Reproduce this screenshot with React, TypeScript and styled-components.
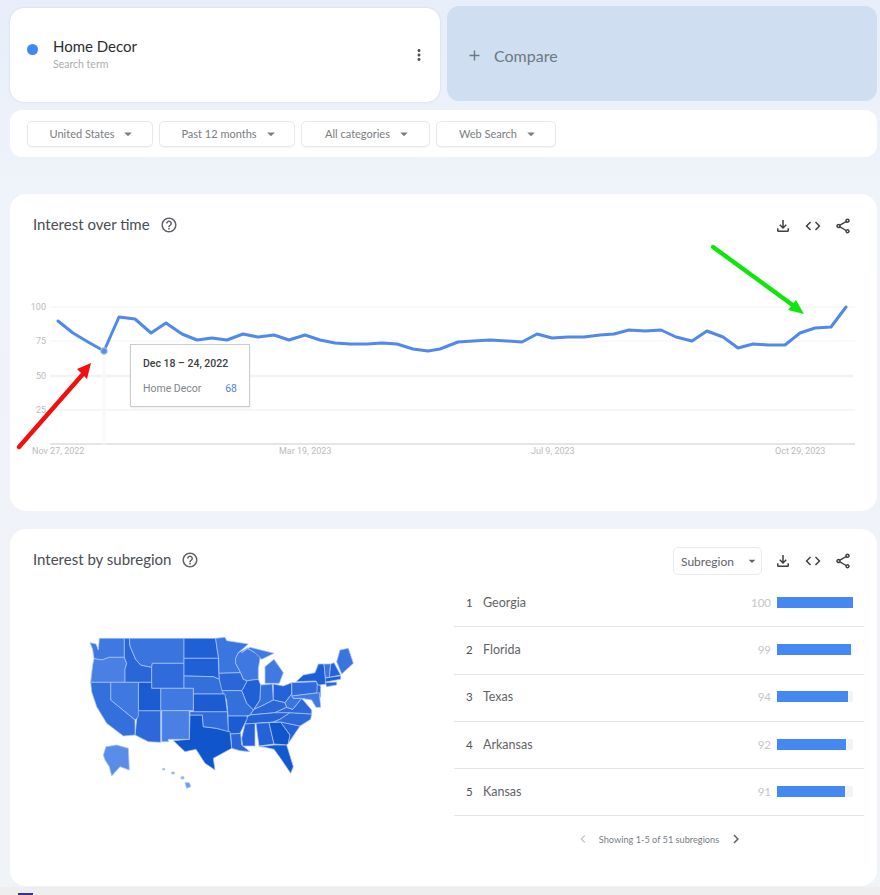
import React from "react";
import styled, { createGlobalStyle } from "styled-components";
import {
  MdAdd,
  MdArrowDropDown,
  MdChevronLeft,
  MdChevronRight,
  MdCode,
  MdHelpOutline,
  MdMoreVert,
  MdOutlineFileDownload,
  MdOutlineShare,
} from "react-icons/md";

const GlobalStyle = createGlobalStyle`
  html, body {
    margin: 0;
    padding: 0;
    overflow: hidden;
    background: #eeeeee;
  }
  * {
    box-sizing: border-box;
  }
`;

const Page = styled.div`
  position: relative;
  width: 880px;
  height: 895px;
  overflow: hidden;
  padding: 6px 3px 0 10px;
  font-family: Lato, "Open Sans", sans-serif;
  background: linear-gradient(180deg, #e7eefa 0, #eff3fa 190px, #f0f3f7 887px, #eeeeee 887px);
`;

const TermRow = styled.div`
  display: grid;
  grid-template-columns: 430px 430px;
  gap: 7px;
`;

const TermCard = styled.div`
  margin-top: 2px;
  height: 94px;
  background: #fff;
  border-radius: 14px;
  display: flex;
  align-items: center;
  padding: 0 17px;
  box-shadow: 0 0 2px rgba(60, 64, 67, 0.2);
`;

const TermDot = styled.span`
  width: 11px;
  height: 11px;
  border-radius: 50%;
  background: #4285f4;
  margin-top: -12px;
  margin-right: 15px;
`;

const TermText = styled.div`
  flex: 1;
  margin-top: -2px;
`;

const TermName = styled.div`
  font-size: 15px;
  line-height: 18px;
  color: #2b2d30;
`;

const TermKind = styled.div`
  font-size: 10.5px;
  line-height: 14px;
  margin-top: 2px;
  color: #a9acb0;
`;

const Kebab = styled.span`
  display: flex;
  color: #4f5357;
  margin-right: -5px;
  margin-top: -1px;
`;

const CompareCard = styled.div`
  height: 95px;
  background: #d0def2;
  border-radius: 12px;
  display: flex;
  align-items: center;
  gap: 11px;
  padding: 4px 19px 0 19px;
  color: #6d7883;
  font-size: 16px;
`;

const FilterBar = styled.div`
  margin-top: 8px;
  height: 47px;
  background: #fff;
  border-radius: 12px;
  display: flex;
  align-items: center;
  gap: 6px;
  padding: 0 17px;
`;

const FilterPill = styled.div<{ $width: number }>`
  width: ${(p) => p.$width}px;
  height: 26px;
  padding-left: 7px;
  border: 1px solid #e6e8ea;
  border-radius: 5px;
  display: flex;
  align-items: center;
  justify-content: center;
  gap: 5px;
  font-size: 11px;
  color: #797d82;
  box-shadow: 0 1px 1px rgba(60, 64, 67, 0.06);
`;

const Card = styled.section<{ $top: number; $height: number }>`
  position: relative;
  margin-top: ${(p) => p.$top}px;
  height: ${(p) => p.$height}px;
  background: #fff;
  border-radius: 16px;
`;

const CardHeader = styled.header`
  height: 46px;
  padding: 18px 25px 0 23px;
  display: flex;
  align-items: center;
`;

const CardTitle = styled.h2`
  margin: -4px 0 0 0;
  font-size: 15px;
  font-weight: 400;
  color: #494d52;
`;

const HelpIcon = styled.span`
  display: flex;
  margin: -2px 0 0 10px;
  color: #5f6368;
`;

const Spacer = styled.div`
  flex: 1;
`;

const ToolIcons = styled.div`
  display: flex;
  align-items: center;
  gap: 12px;
  color: #3c4043;
`;

const SelectBox = styled.div`
  width: 89px;
  height: 28px;
  margin-right: 12px;
  border: 1px solid #e8eaed;
  border-radius: 5px;
  display: flex;
  align-items: center;
  justify-content: space-between;
  padding: 0 1px 0 7px;
  font-size: 12px;
  color: #5f6368;
`;

const ChartSvg = styled.svg`
  display: block;
`;

const AxisText = styled.text`
  font-family: Roboto, sans-serif;
  font-size: 9px;
  fill: #b9bbbe;
`;

const Tooltip = styled.div`
  position: absolute;
  left: 120px;
  top: 150px;
  width: 120px;
  height: 63px;
  padding: 13px 12px 0 12px;
  background: #fff;
  border: 1px solid #c9cbce;
  font-family: Roboto, sans-serif;
  font-size: 10.5px;
  box-shadow: 0 1px 2px rgba(0, 0, 0, 0.08);
`;

const TooltipDate = styled.div`
  font-weight: 500;
  line-height: 12px;
  color: #3c4043;
`;

const TooltipRow = styled.div`
  margin-top: 13px;
  line-height: 12px;
  display: flex;
  justify-content: space-between;
  color: #80868b;
`;

const TooltipValue = styled.span`
  color: #4f7fe8;
`;

const SubBody = styled.div`
  display: flex;
  padding-top: 4px;
`;

const MapBox = styled.div`
  width: 444px;
  padding: 41px 0 0 60px;
`;

const RankList = styled.div`
  width: 410px;
  padding-top: 1px;
`;

const RankRow = styled.div`
  height: 47.3px;
  padding: 0 11px 2px 0;
  border-bottom: 1px solid #e3e4e6;
  display: flex;
  align-items: center;
  font-size: 12.5px;
  color: #5f6368;
`;

const RankNumber = styled.span`
  width: 29px;
  padding-left: 12px;
  font-size: 11.5px;
  color: #4d5156;
`;

const RankName = styled.span`
  flex: 1;
`;

const RankValue = styled.span`
  margin-right: 6px;
  font-size: 11.5px;
  color: #c4c6c8;
`;

const BarTrack = styled.div`
  width: 76px;
  height: 11px;
  background: #f3f3f3;
`;

const BarFill = styled.div`
  height: 100%;
  background: #4688f2;
`;

const Pager = styled.div`
  height: 46px;
  display: flex;
  align-items: center;
  justify-content: center;
  gap: 8px;
  padding-left: 2px;
  font-size: 9.2px;
  color: #797d82;
`;

const PagerArrow = styled.span<{ $muted?: boolean }>`
  display: flex;
  color: ${(p) => (p.$muted ? "#c4c7ca" : "#5f6368")};
`;

const ArrowLayer = styled.svg`
  position: absolute;
  left: 0;
  top: 0;
  pointer-events: none;
`;

const PurpleTab = styled.div`
  position: absolute;
  left: 18px;
  bottom: 0;
  width: 15px;
  height: 2px;
  background: #3f2d8f;
`;

const linePoints =
  "58,321 73,333 88,342 104,351 119,317 135,319 151,333 166,323 182,334 197,340 212,338 227,340 243,334 258,337 274,335 289,340 305,335 320,340 335,343 350,344 367,344 382,343 397,344 413,349 428,351 440,349 458,342 473,341 490,340 507,341 522,342 537,334 552,338 568,337 584,337 600,335 614,334 629,330 645,331 661,330 676,337 692,341 707,331 723,337 738,348 753,344 768,345 785,345 800,333 815,328 831,327 846,307";

const mapStates: { fill: string; points: string }[] = [
  { fill: "#3f78e0", points: "88,55 163,55 163,112 118,112 96,120 72,116 68,88 60,68 78,72 85,90" }, // WA
  { fill: "#4a80e4", points: "72,116 96,120 118,112 163,112 170,130 165,148 165,187 62,187 68,135" }, // OR
  { fill: "#2a66d8", points: "163,55 178,55 180,78 197,118 212,135 245,142 245,187 165,187 165,148 170,130 163,112" }, // ID
  { fill: "#3a74de", points: "178,55 342,55 342,130 247,130 245,142 212,135 197,118 180,78" }, // MT
  { fill: "#2f6bda", points: "247,130 342,130 342,205 245,205 245,142" }, // WY
  { fill: "#2060d6", points: "342,55 437,55 441,85 446,115 342,115" }, // ND
  { fill: "#2060d6", points: "342,115 446,115 445,128 448,178 430,170 342,168" }, // SD
  { fill: "#3470dc", points: "342,168 430,170 448,178 460,212 465,222 370,222 370,205 342,205" }, // NE
  { fill: "#3b75df", points: "437,55 465,52 470,62 490,65 535,72 505,98 497,115 497,130 512,158 447,160 446,115 441,85" }, // MN
  { fill: "#2a66d8", points: "447,160 512,158 520,178 532,182 520,205 515,212 456,212 448,178" }, // IA
  { fill: "#3f78e0", points: "505,98 532,85 555,98 572,105 565,145 565,178 532,182 520,178 512,158 497,130 497,115" }, // WI
  { fill: "#2060d6", points: "532,182 565,178 572,195 570,240 550,270 530,250 515,212 520,205" }, // IL
  { fill: "#4079e2", points: "585,190 585,140 612,118 640,158 628,190" }, // MI
  { fill: "#4079e2", points: "515,98 540,82 612,100 575,118 555,98 532,85" }, // MI upper
  { fill: "#3470dc", points: "572,195 607,192 610,240 575,258 552,268 570,240" }, // IN
  { fill: "#2562d7", points: "610,192 640,198 665,188 665,222 645,248 610,240" }, // OH
  { fill: "#2a66d8", points: "540,285 552,268 575,258 610,240 645,248 650,262 615,278" }, // KY
  { fill: "#2562d7", points: "540,285 615,278 660,278 630,298 610,306 525,312 532,290" }, // TN
  { fill: "#3470dc", points: "456,212 515,212 530,250 550,270 540,285 530,288 474,288 470,240" }, // MO
  { fill: "#1c5cd2", points: "474,288 530,288 532,295 510,340 482,342 474,335" }, // AR
  { fill: "#2a66d8", points: "482,342 512,340 515,375 540,395 510,392 485,385" }, // LA
  { fill: "#2562d7", points: "525,312 555,310 555,378 518,378 515,355" }, // MS
  { fill: "#2562d7", points: "558,310 597,308 612,372 567,378" }, // AL
  { fill: "#1155cc", points: "597,308 632,306 660,345 655,370 650,375 612,372" }, // GA
  { fill: "#1258ce", points: "567,380 612,375 650,375 670,440 662,460 635,420 612,388 585,382" }, // FL
  { fill: "#2562d7", points: "632,306 690,318 655,370 660,345" }, // SC
  { fill: "#2c68d9", points: "610,306 630,298 660,278 725,282 722,298 690,318 632,306" }, // NC
  { fill: "#2c68d9", points: "615,278 650,262 668,268 695,235 725,270 725,282 660,278" }, // VA
  { fill: "#3a74de", points: "645,248 665,222 670,235 695,235 668,268 650,262" }, // WV
  { fill: "#2f6bda", points: "665,188 740,185 748,218 666,228" }, // PA
  { fill: "#1f5fd5", points: "678,185 700,165 735,158 745,132 762,132 768,192 745,196 738,183" }, // NY
  { fill: "#3a74de", points: "762,132 782,132 778,172 766,172" }, // VT
  { fill: "#2562d7", points: "782,132 792,128 812,165 778,172" }, // NH
  { fill: "#3a74de", points: "800,125 810,90 835,85 850,130 815,162" }, // ME
  { fill: "#1f5fd5", points: "766,174 812,167 812,178 766,186" }, // MA
  { fill: "#2a66d8", points: "766,188 800,186 800,195 770,200" }, // CT RI
  { fill: "#2a66d8", points: "742,192 752,198 752,232 740,222" }, // NJ
  { fill: "#4079e2", points: "666,228 748,218 752,262 738,262 725,240 695,235 670,235" }, // MD DE
  { fill: "#1155cc", points: "360,285 397,285 400,320 440,325 480,335 485,385 430,415 435,450 405,430 378,388 345,395 310,362 358,358" }, // TX
  { fill: "#2f6bda", points: "360,275 472,275 475,335 440,325 400,320 397,285 360,285" }, // OK
  { fill: "#1c5cd2", points: "370,222 465,222 472,275 370,275" }, // KS
  { fill: "#4079e2", points: "272,205 370,205 370,272 272,272" }, // CO
  { fill: "#4a80e4", points: "275,272 358,272 358,358 295,358 295,365 275,365" }, // NM
  { fill: "#2c68d9", points: "203,272 272,272 272,367 235,365 195,345 200,300" }, // AZ
  { fill: "#1c5cd2", points: "205,187 245,187 245,205 272,205 272,272 205,272" }, // UT
  { fill: "#3f78e0", points: "122,187 205,187 205,290 195,300 122,240" }, // NV
  { fill: "#3470dc", points: "62,187 122,187 122,240 195,300 195,345 160,348 110,310 80,260 65,215" }, // CA
  { fill: "#5a8de8", points: "108,380 140,375 175,385 178,450 150,440 125,468 118,440 105,420 100,405" }, // AK
  { fill: "#6c9aec", points: "345,488 358,488 362,500 350,505" }, // HI
  { fill: "#8fb2f0", points: "278,445 284,445 284,450 278,450" },
  { fill: "#8fb2f0", points: "305,456 313,456 313,462 305,462" },
  { fill: "#8fb2f0", points: "333,470 342,470 342,477 333,477" },
];

const regions = [
  { rank: 1, name: "Georgia", value: 100 },
  { rank: 2, name: "Florida", value: 99 },
  { rank: 3, name: "Texas", value: 94 },
  { rank: 4, name: "Arkansas", value: 92 },
  { rank: 5, name: "Kansas", value: 91 },
];

const filters = [
  { label: "United States", width: 126 },
  { label: "Past 12 months", width: 136 },
  { label: "All categories", width: 129 },
  { label: "Web Search", width: 120 },
];

const Tools: React.FC = () => (
  <ToolIcons>
    <MdOutlineFileDownload size={18} />
    <MdCode size={18} />
    <MdOutlineShare size={18} />
  </ToolIcons>
);

const InterestChart: React.FC = () => (
  <ChartSvg width={867} height={230} viewBox="10 240 867 230">
    <line x1="50" x2="855" y1="307" y2="307" stroke="#f1f2f3" />
    <line x1="50" x2="855" y1="341" y2="341" stroke="#f3f4f5" />
    <line x1="50" x2="853" y1="376" y2="376" stroke="#f1f2f3" strokeWidth="2.5" />
    <line x1="50" x2="855" y1="410" y2="410" stroke="#eceded" />
    <line x1="50" x2="855" y1="444" y2="444" stroke="#c9cbce" />
    <line x1="104" x2="104" y1="351" y2="444" stroke="#f9f9fa" strokeWidth="3" />
    <AxisText x="46" y="310" textAnchor="end">100</AxisText>
    <AxisText x="46" y="344" textAnchor="end">75</AxisText>
    <AxisText x="46" y="379" textAnchor="end">50</AxisText>
    <AxisText x="46" y="413" textAnchor="end">25</AxisText>
    <AxisText x="32" y="454">Nov 27, 2022</AxisText>
    <AxisText x="279" y="454">Mar 19, 2023</AxisText>
    <AxisText x="531" y="454">Jul 9, 2023</AxisText>
    <AxisText x="775" y="454">Oct 29, 2023</AxisText>
    <polyline points={linePoints} fill="none" stroke="#5089ea" strokeWidth="3" strokeLinejoin="round" strokeLinecap="round" />
    <circle cx="104" cy="351" r="3.4" fill="#5b8fe6" stroke="#b9cff5" />
  </ChartSvg>
);

const UsMap: React.FC = () => (
  <svg width={300} height={180} viewBox="0 0 900 540" style={{ display: "block" }}>
    {mapStates.map((s) => (
      <polygon key={s.points} points={s.points} fill={s.fill} stroke="#a9c4f3" strokeWidth="2.2" strokeLinejoin="round" />
    ))}
  </svg>
);

const App: React.FC = () => {
  return (
    <Page>
      <GlobalStyle />
      <TermRow>
        <TermCard>
          <TermDot />
          <TermText>
            <TermName>Home Decor</TermName>
            <TermKind>Search term</TermKind>
          </TermText>
          <Kebab>
            <MdMoreVert size={18} />
          </Kebab>
        </TermCard>
        <CompareCard>
          <MdAdd size={17} />
          Compare
        </CompareCard>
      </TermRow>

      <FilterBar>
        {filters.map((f) => (
          <FilterPill key={f.label} $width={f.width}>
            {f.label}
            <MdArrowDropDown size={18} />
          </FilterPill>
        ))}
      </FilterBar>

      <Card $top={37} $height={317}>
        <CardHeader>
          <CardTitle>Interest over time</CardTitle>
          <HelpIcon>
            <MdHelpOutline size={18} />
          </HelpIcon>
          <Spacer />
          <Tools />
        </CardHeader>
        <InterestChart />
        <Tooltip>
          <TooltipDate>Dec 18 – 24, 2022</TooltipDate>
          <TooltipRow>
            Home Decor
            <TooltipValue>68</TooltipValue>
          </TooltipRow>
        </Tooltip>
      </Card>

      <Card $top={18} $height={357}>
        <CardHeader>
          <CardTitle>Interest by subregion</CardTitle>
          <HelpIcon>
            <MdHelpOutline size={18} />
          </HelpIcon>
          <Spacer />
          <SelectBox>
            Subregion
            <MdArrowDropDown size={16} />
          </SelectBox>
          <Tools />
        </CardHeader>
        <SubBody>
          <MapBox>
            <UsMap />
          </MapBox>
          <RankList>
            {regions.map((r) => (
              <RankRow key={r.rank}>
                <RankNumber>{r.rank}</RankNumber>
                <RankName>{r.name}</RankName>
                <RankValue>{r.value}</RankValue>
                <BarTrack>
                  <BarFill style={{ width: `${r.value === 100 ? 100 : r.value - 1}%` }} />
                </BarTrack>
              </RankRow>
            ))}
            <Pager>
              <PagerArrow $muted>
                <MdChevronLeft size={16} />
              </PagerArrow>
              Showing 1-5 of 51 subregions
              <PagerArrow>
                <MdChevronRight size={18} />
              </PagerArrow>
            </Pager>
          </RankList>
        </SubBody>
      </Card>

      <PurpleTab />

      <ArrowLayer width={880} height={895} viewBox="0 0 880 895">
        <line x1="19" y1="447" x2="83" y2="374" stroke="#f01010" strokeWidth="4.4" strokeLinecap="round" />
        <polygon points="91,363 77,369 87,379" fill="#f01010" />
        <line x1="713" y1="247" x2="794" y2="306" stroke="#0ee60e" strokeWidth="4.4" strokeLinecap="round" />
        <polygon points="804,314 796,300 788,310" fill="#0ee60e" />
      </ArrowLayer>
    </Page>
  );
};

export default App;
